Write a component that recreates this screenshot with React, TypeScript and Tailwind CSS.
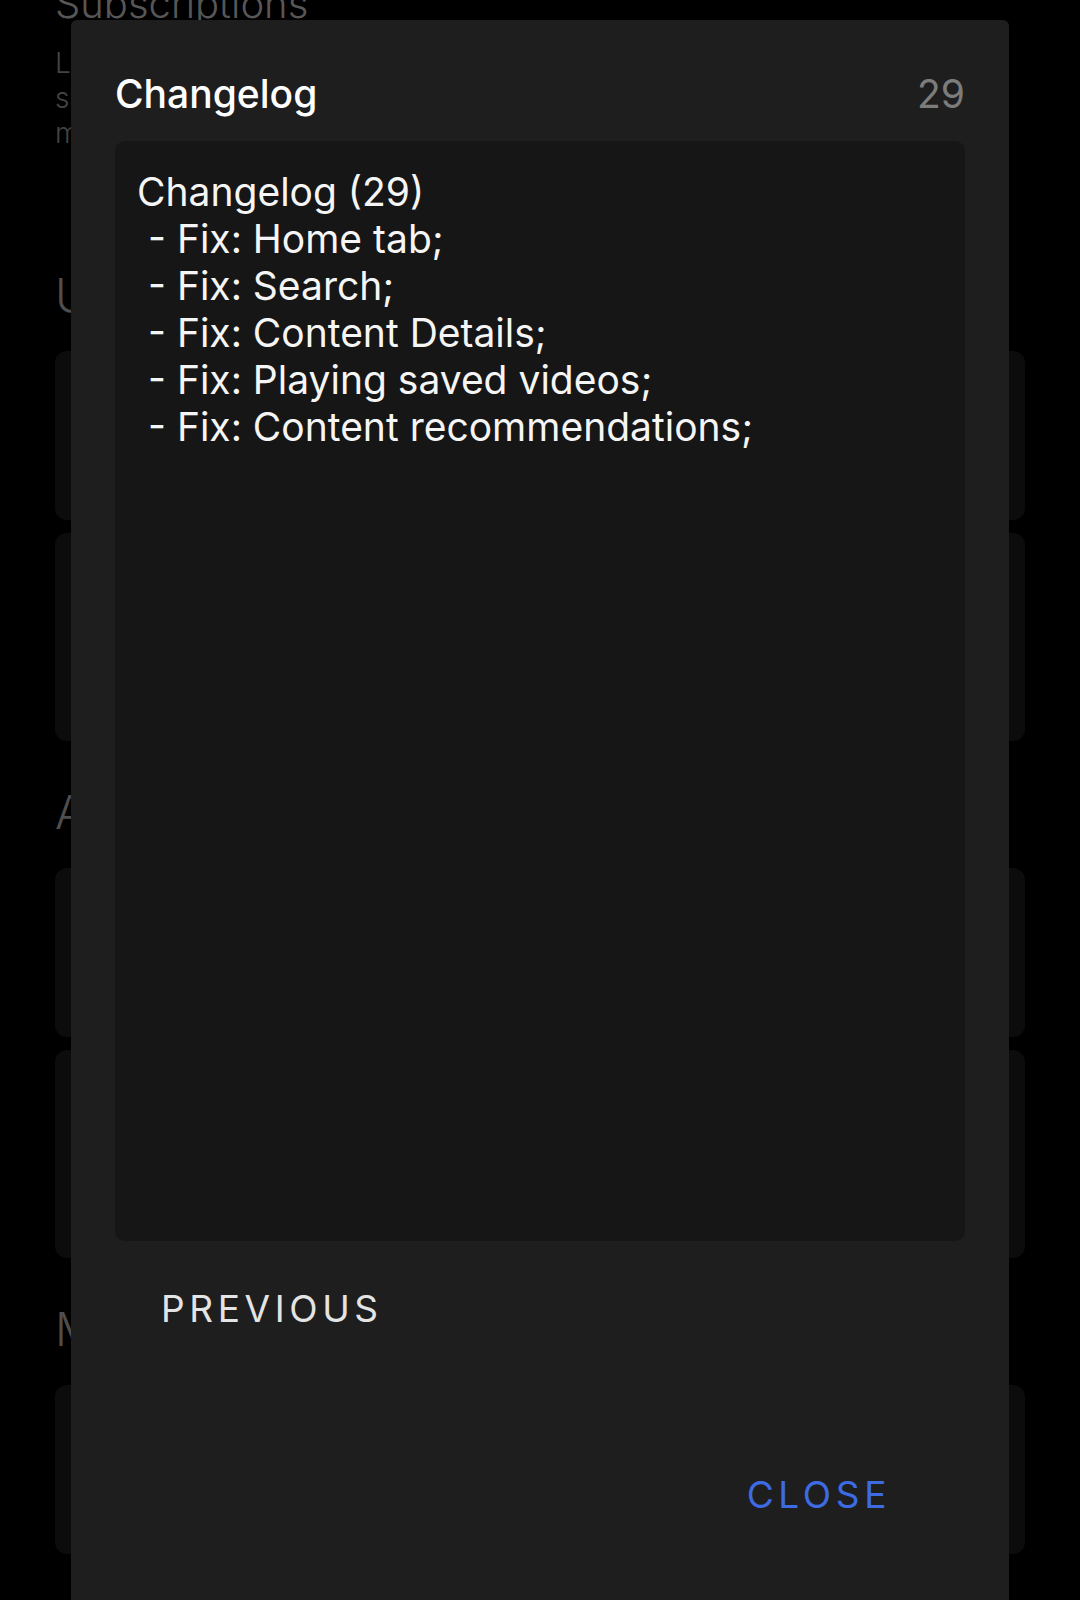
const lines = [
  'Changelog (29)',
  ' - Fix: Home tab;',
  ' - Fix: Search;',
  ' - Fix: Content Details;',
  ' - Fix: Playing saved videos;',
  ' - Fix: Content recommendations;',
];

const BgCard = ({ tall }: { tall?: boolean }) => (
  <div className={`rounded-[12px] bg-[#0c0c0c] ${tall ? 'h-[208px]' : 'h-[169px]'}`} />
);

const BgSection = ({ title, single }: { title: string; single?: boolean }) => (
  <div className="flex flex-col">
    <div className="h-[60px] flex items-center text-[46px] font-light text-[#4e4e4e] leading-none">{title}</div>
    <div className="mt-[26px] flex flex-col gap-[13px]">
      <BgCard />
      {!single && <BgCard tall />}
    </div>
  </div>
);

export default function App() {
  return (
    <div
      className="relative w-[1080px] h-[1600px] overflow-hidden bg-black"
      style={{ fontFamily: 'Inter, "Noto Sans", sans-serif' }}
    >
      {/* settings screen behind the dialog, scrolled */}
      <div className="flex flex-col px-[55px] -mt-[20px]">
        <div className="text-[40px] font-light text-[#575757] leading-[48px]">Subscriptions</div>
        <div className="mt-[18px] text-[28px] font-light text-[#444] leading-[35px]">
          <div>Lorem</div>
          <div>s</div>
          <div>m</div>
        </div>
        <div className="mt-[114px] flex flex-col gap-[41px]">
          <BgSection title="Updates" />
          <BgSection title="Appearance" />
          <BgSection title="Misc" single />
        </div>
      </div>

      {/* dialog */}
      <div className="absolute left-[71px] top-[20px] w-[938px] h-[1600px] rounded-[6px] bg-[#1e1e1e] px-[44px] pt-[49px] flex flex-col">
        <div className="flex items-center justify-between h-[48px]">
          <span className="text-[39px] font-medium text-white leading-none">Changelog</span>
          <span className="text-[39px] text-[#7c7c7c] leading-none">29</span>
        </div>
        <div className="mt-[24px] h-[1100px] rounded-[10px] bg-[#161616] px-[22px] pt-[27px]">
          {lines.map((l) => (
            <div key={l} className="whitespace-pre text-[39px] leading-[47px] text-[#f5f5f5]">
              {l}
            </div>
          ))}
        </div>
        <div className="flex flex-col">
          <div className="flex">
            <button className="ml-[46px] mt-[42px] h-[50px] text-[37px] font-normal tracking-[0.125em] text-[#e4e4e4] leading-none">
              PREVIOUS
            </button>
          </div>
          <div className="flex justify-end">
            <button className="mr-[74px] mt-[136px] h-[50px] text-[37px] font-normal tracking-[0.125em] text-[#3d6be3] leading-none">
              CLOSE
            </button>
          </div>
        </div>
      </div>
    </div>
  );
}
